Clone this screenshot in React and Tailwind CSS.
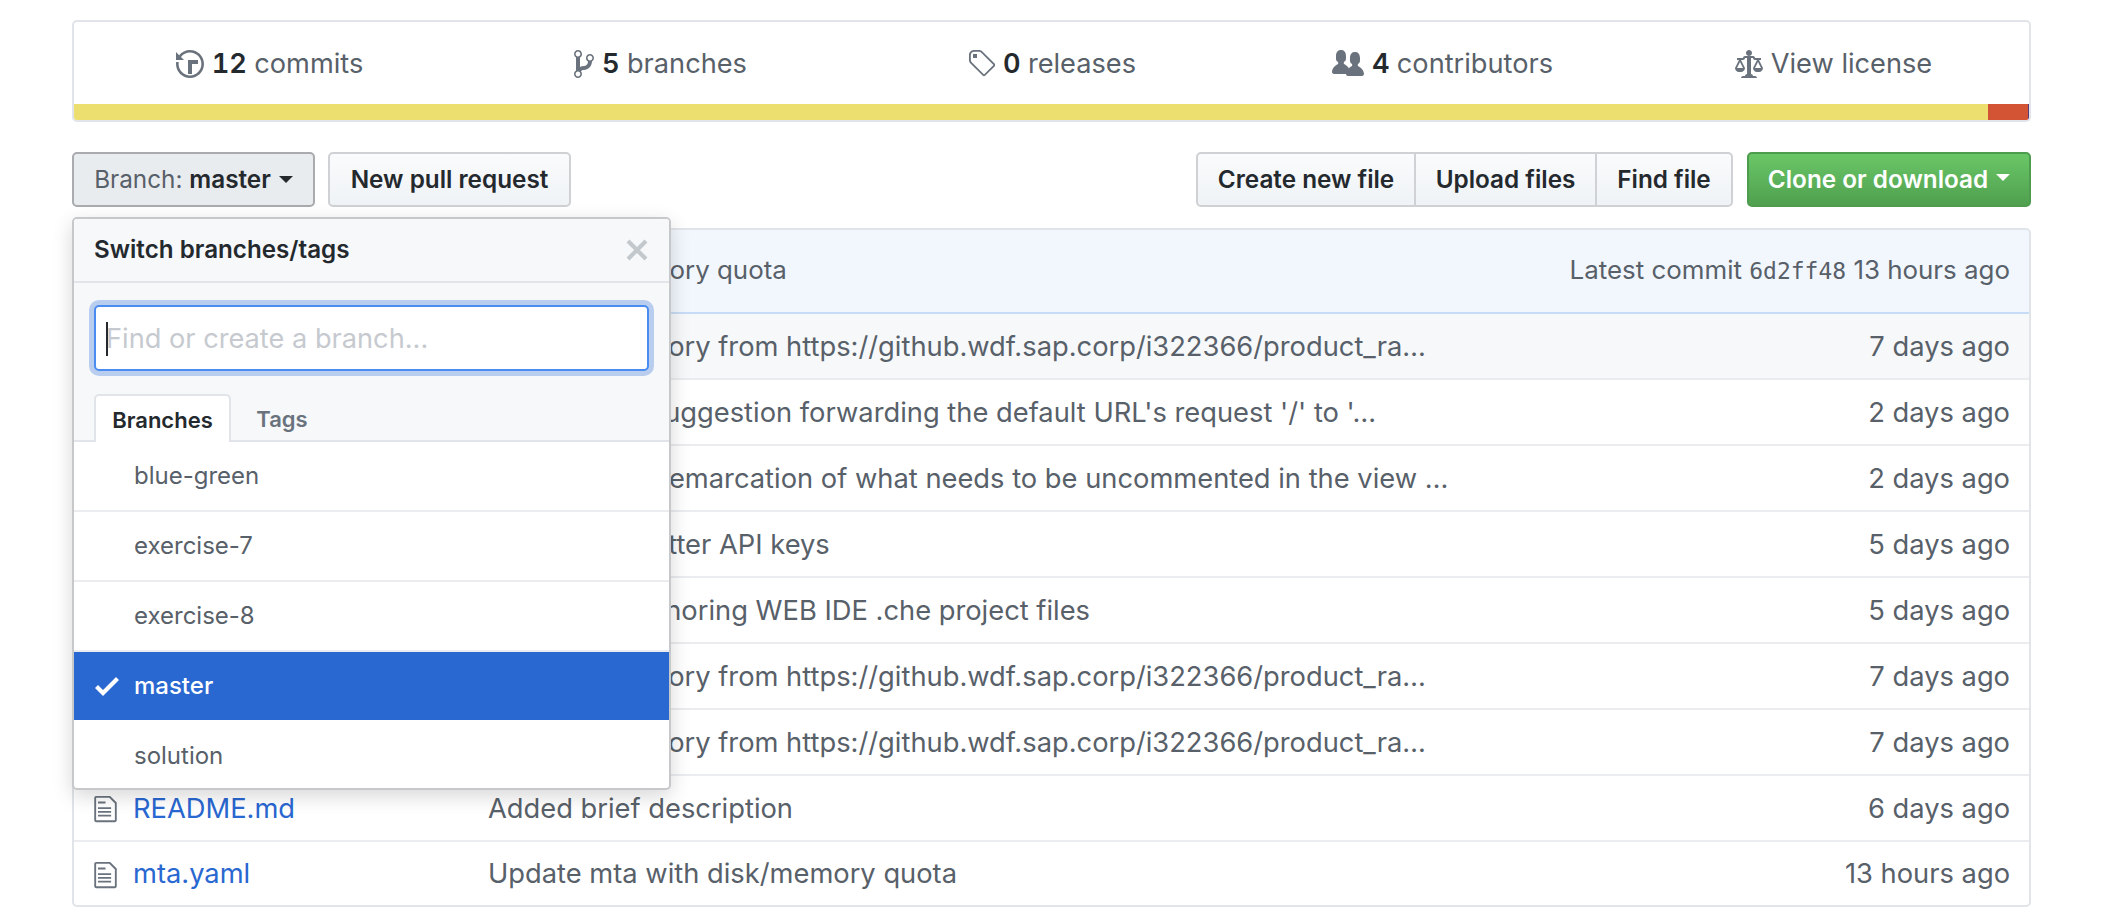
const font = { fontFamily: 'Inter, "Liberation Sans", sans-serif' }

function Icon({ d, w, h = 30, vw, className = 'fill-[#6a737d]' }) {
    return (
        <svg width={w} height={h} viewBox={`0 0 ${vw} 16`} className={`${className} shrink-0`}>
            <path fillRule="evenodd" d={d} />
        </svg>
    )
}

const icons = {
    history: 'M8 13H6V6h5v2H8v5zM7 1C4.81 1 2.87 2.02 1.59 3.59L0 2v4h4L2.5 4.5C3.55 3.17 5.17 2.3 7 2.3c3.14 0 5.7 2.56 5.7 5.7s-2.56 5.7-5.7 5.7A5.71 5.71 0 0 1 1.3 8c0-.34.03-.67.09-1H.08C.03 7.33 0 7.66 0 8c0 3.86 3.14 7 7 7s7-3.14 7-7-3.14-7-7-7z',
    branch: 'M10 5c0-1.11-.89-2-2-2a1.993 1.993 0 0 0-1 3.72v.3c-.02.52-.23.98-.63 1.38-.4.4-.86.61-1.38.63-.83.02-1.48.16-2 .45V4.72a1.993 1.993 0 0 0-1-3.72C.88 1 0 1.89 0 3a2 2 0 0 0 1 1.72v6.56c-.59.35-1 .99-1 1.72 0 1.11.89 2 2 2 1.11 0 2-.89 2-2 0-.53-.2-1-.53-1.36.09-.06.48-.41.59-.47.25-.11.56-.17.94-.17 1.05-.05 1.95-.45 2.75-1.25S8.95 7.77 9 6.73h-.02C9.59 6.37 10 5.73 10 5zM2 1.8c.66 0 1.2.55 1.2 1.2 0 .65-.55 1.2-1.2 1.2C1.35 4.2.8 3.65.8 3c0-.65.55-1.2 1.2-1.2zm0 12.41c-.66 0-1.2-.55-1.2-1.2 0-.65.55-1.2 1.2-1.2.65 0 1.2.55 1.2 1.2 0 .65-.55 1.2-1.2 1.2zm6-8c-.66 0-1.2-.55-1.2-1.2 0-.65.55-1.2 1.2-1.2.65 0 1.2.55 1.2 1.2 0 .65-.55 1.2-1.2 1.2z',
    tag: 'M7.73 1.73C7.26 1.26 6.62 1 5.96 1H3.5C2.13 1 1 2.13 1 3.5v2.47c0 .66.27 1.3.73 1.77l6.06 6.06c.39.39 1.02.39 1.41 0l4.59-4.59a.996.996 0 0 0 0-1.41L7.73 1.73zM2.38 7.09c-.31-.3-.47-.7-.47-1.13V3.5c0-.88.72-1.59 1.59-1.59h2.47c.42 0 .83.16 1.13.47l6.14 6.13-4.73 4.73-6.13-6.15zM3.01 3h2v2H3V3h.01z',
    people: 'M16 12.999c0 .439-.45 1-1 1H7.995c-.539 0-.994-.447-.995-.999H1c-.54 0-1-.561-1-1 0-2.634 3-4 3-4s.229-.409 0-1c-.841-.621-1.058-.59-1-3 .058-2.419 1.367-3 2.5-3s2.442.58 2.5 3c.058 2.41-.159 2.379-1 3-.229.59 0 1 0 1s1.549.711 2.42 2.088C9.196 9.369 10 8.999 10 8.999s.229-.409 0-1c-.841-.62-1.058-.59-1-3 .058-2.419 1.367-3 2.5-3s2.437.581 2.495 3c.059 2.41-.158 2.38-1 3-.229.59 0 1 0 1s3.005 1.366 3.005 4z',
    law: 'M7 4c-.83 0-1.5-.67-1.5-1.5S6.17 1 7 1s1.5.67 1.5 1.5S7.83 4 7 4zm7 6c0 1.11-.89 2-2 2h-1c-1.11 0-2-.89-2-2l2-4h-1c-.55 0-1-.45-1-1H8v8c.42 0 1 .45 1 1h1c.42 0 1 .45 1 1H3c0-.55.58-1 1-1h1c0-.55.58-1 1-1h.03L6 5H5c0 .55-.45 1-1 1H3l2 4c0 1.11-.89 2-2 2H2c-1.11 0-2-.89-2-2l2-4H1V5h3c0-.55.45-1 1-1h4c.55 0 1 .45 1 1h3v1h-1l2 4zM2.5 7L1 10h3L2.5 7zM13 10l-1.5-3-1.5 3h3z',
    file: 'M6 5H2V4h4v1zM2 8h7V7H2v1zm0 2h7V9H2v1zm0 2h7v-1H2v1zm10-7.5V14c0 .55-.45 1-1 1H1c-.55 0-1-.45-1-1V2c0-.55.45-1 1-1h7.5L12 4.5zM11 5L8 2H1v12h10V5z',
    x: 'M7.48 8l3.75 3.75-1.48 1.48L6 9.48l-3.75 3.75-1.48-1.48L4.52 8 .77 4.25l1.48-1.48L6 6.52l3.75-3.75 1.48 1.48L7.48 8z',
    check: 'M12 5l-8 8-4-4 1.5-1.5L4 10l6.5-6.5L12 5z',
}

const stats = [
    { icon: 'history', vw: 14, w: 28, h: 32, num: '12', label: 'commits' },
    { icon: 'branch', vw: 10, w: 20, h: 32, num: '5', label: 'branches' },
    { icon: 'tag', vw: 14, w: 28, h: 32, num: '0', label: 'releases' },
    { icon: 'people', vw: 16, w: 32, h: 32, num: '4', label: 'contributors' },
    { icon: 'law', vw: 14, w: 28, h: 32, label: 'View license' },
]

const rows = [
    { msg: 'Import repository from https://github.wdf.sap.corp/i322366/product_ra…', age: '7 days ago', hover: true },
    { msg: 'Accepting a suggestion forwarding the default URL\'s request \'/\' to \'…', age: '2 days ago' },
    { msg: 'Added clear demarcation of what needs to be uncommented in the view …', age: '2 days ago' },
    { msg: 'Removing Twitter API keys', age: '5 days ago' },
    { msg: 'Gitignore is ignoring WEB IDE .che project files', age: '5 days ago' },
    { msg: 'Import repository from https://github.wdf.sap.corp/i322366/product_ra…', age: '7 days ago' },
    { msg: 'Import repository from https://github.wdf.sap.corp/i322366/product_ra…', age: '7 days ago' },
    { name: 'README.md', msg: 'Added brief description', age: '6 days ago' },
    { name: 'mta.yaml', msg: 'Update mta with disk/memory quota', age: '13 hours ago' },
]

const branches = ['blue-green', 'exercise-7', 'exercise-8', 'master', 'solution']

function BranchMenu() {
    return (
        <div className="absolute left-0 top-[65px] z-10 w-[599px] h-[573px] bg-white border-2 border-[#c6c8ca] rounded-[5px] shadow-[0_6px_20px_rgba(0,0,0,0.16)] overflow-hidden font-normal">
            <div className="h-[64px] bg-[#f6f8fa] border-b-2 border-[#e1e4e8] flex items-center justify-between pl-[20px] pr-[20px]">
                <span className="text-[24.2px] font-semibold text-[#24292e]">Switch branches/tags</span>
                <Icon d={icons.x} vw={12} w={24} h={32} className="fill-[#c3c8cc]" />
            </div>
            <div className="bg-[#f6f8fa] h-[159px] border-b-2 border-[#e1e4e8] px-[20px] pt-[22px]">
                <div className="relative h-[66px] rounded-[5px] bg-white border-2 border-[#4a8cf0] shadow-[0_0_0_5px_#b9cdee]">
                    <input
                        placeholder="Find or create a branch..."
                        className="w-full h-full px-[10px] text-[27.2px] bg-transparent outline-none placeholder:text-[#c6cacf]"
                    />
                    <span className="absolute left-[10px] top-[15px] w-[2px] h-[34px] bg-[#24292e]"></span>
                </div>
                <div className="flex mt-[23px] text-[22px] font-semibold">
                    <div className="w-[137px] h-[48px] pt-[3px] bg-white border-2 border-b-0 border-[#e1e4e8] rounded-t-[5px] flex items-center justify-center text-[#24292e]">Branches</div>
                    <div className="w-[102px] h-[48px] pt-[3px] flex items-center justify-center text-[#6a737d]">Tags</div>
                </div>
            </div>
            {branches.map((b) => (
                b === 'master' ? (
                    <div key={b} className="h-[68px] bg-[#2967d1] text-white flex items-center pl-[21px] text-[24px] font-medium">
                        <Icon d={icons.check} vw={12} w={24} h={32} className="fill-white" />
                        <span className="ml-[15px]">{b}</span>
                    </div>
                ) : (
                    <div key={b} className="h-[70px] border-b-2 border-[#eaecef] last:border-b-0 last:h-[72px] flex items-center pl-[60px] text-[24px] text-[#586069]">{b}</div>
                )
            ))}
        </div>
    )
}

export default function App() {
    return (
        <div style={font} className="w-[2114px] h-[920px] bg-white pt-[20px] pl-[72px] pr-[83px] overflow-hidden">
            <div className="h-[102px] border-2 border-[#e1e4e8] rounded-[5px] overflow-hidden flex flex-col">
                <div className="h-[82px] grid grid-cols-5">
                    {stats.map((s) => (
                        <div key={s.label} className="flex items-center justify-center gap-[8px] text-[27.2px] text-[#586069] pt-[2px]">
                            <Icon d={icons[s.icon]} vw={s.vw} w={s.w} h={s.h} />
                            <span>
                                {s.num && <b className="font-semibold tabular-nums text-[#24292e]">{s.num} </b>}
                                {s.label}
                            </span>
                        </div>
                    ))}
                </div>
                <div className="h-[16px] flex">
                    <div className="flex-1 bg-[#ecdf70]"></div>
                    <div className="w-[40px] bg-[#d25434]"></div>
                    <div className="w-[1px] bg-[#563d7c]"></div>
                </div>
            </div>

            <div className="mt-[30px] h-[55px] flex items-stretch text-[24.3px] font-semibold">
                <div className="relative">
                    <div className="w-[243px] h-full rounded-[5px] bg-[#e9ecef] border-2 border-[#a9abae] flex items-center justify-center text-[#24292e]">
                        <span className="font-normal text-[#586069]">Branch:&nbsp;</span>master
                        <span className="ml-[8px] border-x-[7px] border-x-transparent border-t-[7px] border-t-[#24292e]"></span>
                    </div>
                    <BranchMenu />
                </div>
                <button className="ml-[13px] w-[243px] rounded-[5px] bg-gradient-to-b from-[#fafbfc] to-[#eff3f6] border-2 border-[#cfd1d4] text-[#24292e]">New pull request</button>
                <div className="ml-auto flex rounded-[5px] bg-gradient-to-b from-[#fafbfc] to-[#eff3f6] border-2 border-[#cfd1d4] text-[#24292e]">
                    <div className="w-[218px] flex items-center justify-center border-r-2 border-[#cfd1d4]">Create new file</div>
                    <div className="w-[181px] flex items-center justify-center border-r-2 border-[#cfd1d4]">Upload files</div>
                    <div className="w-[134px] flex items-center justify-center">Find file</div>
                </div>
                <button className="ml-[14px] w-[284px] rounded-[5px] bg-gradient-to-b from-[#6ac767] to-[#50a04f] border-2 border-[#4e9c4e] text-white flex items-center justify-center">
                    Clone or download
                    <span className="ml-[8px] mb-[4px] border-x-[7px] border-x-transparent border-t-[7px] border-t-white"></span>
                </button>
            </div>

            <div className="mt-[21px] border-2 border-[#e1e4e8] rounded-[5px] overflow-hidden">
                <div className="-m-[2px] mb-0 h-[86px] bg-[#f2f7fe] border-2 border-[#c9dcf5] rounded-t-[5px] flex items-center justify-between pr-[19px] pl-[268px] pb-[2px] text-[25.9px] text-[#586069]">
                    <span>Update mta with disk/memory quota</span>
                    <span>Latest commit <span className="font-['DejaVu_Sans_Mono'] text-[23px]">6d2ff48</span> 13 hours ago</span>
                </div>
                {rows.map((r, i) => (
                    <div key={i} className={`h-[66px] flex items-center border-b-2 border-[#eaecef] last:border-b-0 last:h-[63px] pr-[19px] pt-[2px] text-[27.3px] text-[#586069] ${r.hover ? 'bg-[#f6f8fa]' : ''}`}>
                        <div className="w-[414px] flex items-center pl-[20px] shrink-0">
                            {r.name && <Icon d={icons.file} vw={12} w={23} />}
                            {r.name && <span className="ml-[16px] text-[#2967d1]">{r.name}</span>}
                        </div>
                        <span className="flex-1">{r.msg}</span>
                        <span>{r.age}</span>
                    </div>
                ))}
            </div>
        </div>
    )
}
